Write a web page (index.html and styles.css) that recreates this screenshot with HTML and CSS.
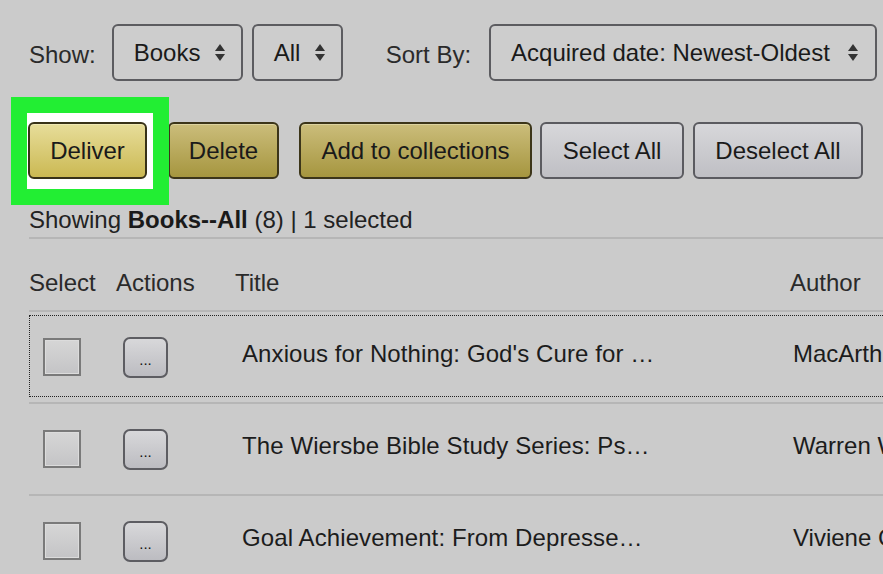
FILE: index.html
```html
<!DOCTYPE html>
<html>
<head>
<meta charset="utf-8">
<link rel="stylesheet" href="styles.css">
</head>
<body>
<div class="page">
  <div class="toolbar">
    <span class="label">Show:</span>
    <div class="select sel-books"><span>Books</span><span class="arrows"><i class="up"></i><i class="down"></i></span></div>
    <div class="select sel-all"><span>All</span><span class="arrows"><i class="up"></i><i class="down"></i></span></div>
    <span class="label sort-label">Sort By:</span>
    <div class="select sel-sort"><span>Acquired date: Newest-Oldest</span><span class="arrows"><i class="up"></i><i class="down"></i></span></div>
  </div>

  <div class="actions">
    <span class="highlight-wrap"><button class="btn gold bright w-deliver">Deliver</button></span>
    <button class="btn gold w-delete">Delete</button>
    <button class="btn gold w-add">Add to collections</button>
    <button class="btn gray w-select">Select All</button>
    <button class="btn gray w-deselect">Deselect All</button>
  </div>

  <div class="status">Showing <b>Books--All</b> (8) | 1 selected</div>

  <div class="table">
    <div class="row head">
      <div class="c-sel">Select</div>
      <div class="c-act">Actions</div>
      <div class="c-title">Title</div>
      <div class="c-author">Author</div>
    </div>
    <div class="row item focused">
      <div class="c-sel"><span class="check"></span></div>
      <div class="c-act"><span class="dots">...</span></div>
      <div class="c-title">Anxious for Nothing: God's Cure for …</div>
      <div class="c-author">MacArthur, John</div>
    </div>
    <div class="row item">
      <div class="c-sel"><span class="check"></span></div>
      <div class="c-act"><span class="dots">...</span></div>
      <div class="c-title">The Wiersbe Bible Study Series: Ps…</div>
      <div class="c-author">Warren W. Wiersbe</div>
    </div>
    <div class="row item">
      <div class="c-sel"><span class="check"></span></div>
      <div class="c-act"><span class="dots">...</span></div>
      <div class="c-title">Goal Achievement: From Depresse…</div>
      <div class="c-author">Viviene Grant</div>
    </div>
  </div>
</div>
</body>
</html>
```
FILE: styles.css
```css
html, body {
  margin: 0;
  padding: 0;
  background: #cbcbcb;
  overflow: hidden;
}
body {
  font-family: "Liberation Sans", Arial, sans-serif;
  font-size: 24px;
  color: #1c1c1c;
}
.page {
  width: 1000px;
  padding: 24px 0 0 29px;
}
.toolbar {
  display: flex;
  align-items: center;
  height: 57px;
}
.label {
  color: #2a2a2a;
  margin-right: 16px;
  padding-top: 4px;
}
.sort-label {
  margin-left: 34px;
  margin-right: 18px;
}
.select {
  box-sizing: border-box;
  height: 57px;
  border: 2px solid #5c5c60;
  border-radius: 6px;
  background: #cdcdcd;
  display: flex;
  align-items: center;
  padding: 0 17px 0 20px;
  gap: 15px;
  margin-right: 9px;
  color: #1a1a1a;
}
.sel-books { width: 131px; }
.sel-all { width: 91px; }
.sel-sort { width: 388px; }
.select span:first-child {
  flex: 1;
}
.arrows {
  display: flex;
  flex-direction: column;
  gap: 3px;
  width: 10px;
}
.arrows i {
  display: block;
  width: 0;
  height: 0;
  border-left: 5px solid transparent;
  border-right: 5px solid transparent;
}
.arrows .up { border-bottom: 7px solid #333; }
.arrows .down { border-top: 7px solid #333; }

.actions {
  display: flex;
  margin-top: 41px;
  height: 57px;
}
.btn {
  box-sizing: border-box;
  height: 57px;
  font-family: "Liberation Sans", Arial, sans-serif;
  font-size: 24px;
  color: #1a1a1a;
  border-radius: 6px;
  padding: 0;
  margin-right: 8px;
  position: relative;
}
.gold {
  border: 2px solid #3c3519;
  background: linear-gradient(#cbbd7b, #a6963f);
  box-shadow: inset 0 1px 0 rgba(255,255,230,0.35);
}
.gold.bright {
  background: linear-gradient(#e7dd9a, #cbb953);
  border-color: #383218;
}
.gray {
  border: 2px solid #5b5b60;
  background: linear-gradient(#d7d7da, #bfbfc4);
}
.w-deliver { width: 119px; margin-right: 0; z-index: 2; }
.w-delete { width: 111px; margin-left: 21px; margin-right: 20px; }
.w-add { width: 233px; }
.w-select { width: 144px; margin-right: 9px; }
.w-deselect { width: 170px; }

.highlight-wrap {
  position: relative;
  display: flex;
  margin-left: -1px;
}
.highlight-wrap::before {
  content: "";
  position: absolute;
  left: -17px;
  top: -25px;
  width: 126px;
  height: 76px;
  border: 16px solid #22ee33;
  background: #ffffff;
  z-index: 1;
}

.status {
  margin-top: 27px;
  line-height: 28px;
  padding-bottom: 3px;
  border-bottom: 2px solid #b6b6b6;
  color: #222;
}
.status b { color: #1a1a1a; }

.row {
  display: grid;
  grid-template-columns: 87px 119px 555px 1fr;
  align-items: center;
  border-bottom: 2px solid #b6b6b6;
}
.head {
  padding: 30px 0 13px;
  line-height: 28px;
  color: #2a2a2a;
}
.item {
  height: 92px;
  box-sizing: border-box;
  position: relative;
}
.focused::after {
  content: "";
  position: absolute;
  left: 0;
  right: 0;
  top: 3px;
  bottom: 5px;
  border: 1px dotted #222;
}
.item .c-sel { padding-left: 14px; display: flex; }
.item .c-act { padding-left: 7px; display: flex; }
.item .c-title { padding-left: 7px; padding-bottom: 6px; letter-spacing: 0.1px; }
.item .c-author { padding-left: 3px; padding-bottom: 6px; }
.check {
  box-sizing: border-box;
  width: 38px;
  height: 38px;
  border: 2px solid #7a7a7a;
  background: linear-gradient(#d6d6d6, #c4c4c6);
  box-shadow: inset 0 0 0 1px #dcdcdc;
}
.dots {
  box-sizing: border-box;
  width: 45px;
  height: 41px;
  border: 2px solid #5d5d62;
  border-radius: 7px;
  background: linear-gradient(#d8d8da, #bcbcc1);
  font-size: 15px;
  line-height: 1;
  display: flex;
  align-items: flex-end;
  justify-content: center;
  padding-bottom: 9px;
  color: #111;
}
```
